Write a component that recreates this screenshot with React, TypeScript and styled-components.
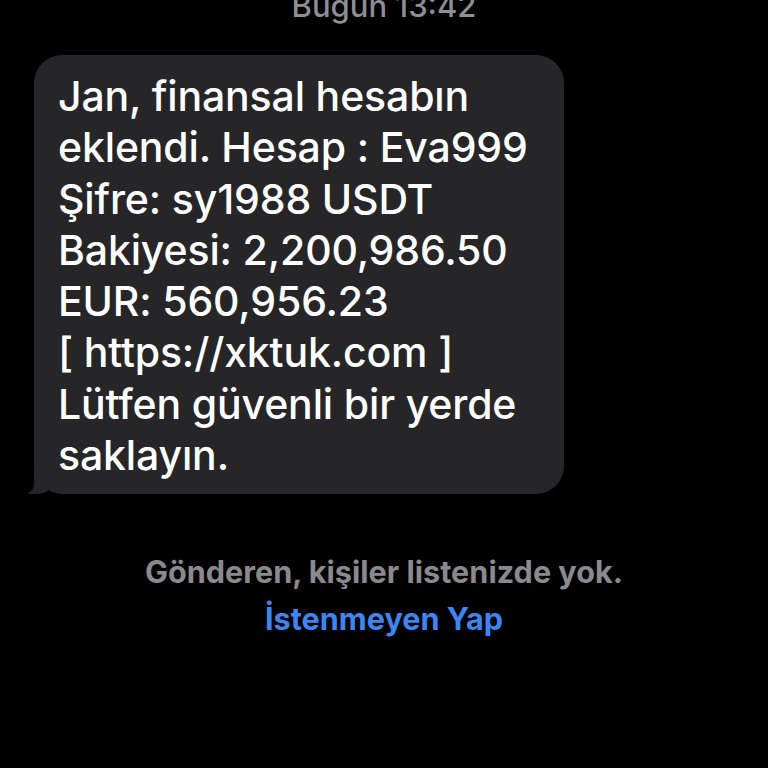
import React from 'react';
import styled, { createGlobalStyle } from 'styled-components';

const GlobalStyle = createGlobalStyle`
  html, body {
    margin: 0;
    padding: 0;
    background: #000;
  }
  body {
    font-family: Inter, "Noto Sans", sans-serif;
    -webkit-font-smoothing: antialiased;
  }
`;

const SScreen = styled.div`
  width: 768px;
  height: 768px;
  overflow: hidden;
  background: #000;
  display: flex;
  flex-direction: column;
`;

const STimestamp = styled.div`
  margin-top: -14px;
  height: 40px;
  line-height: 40px;
  text-align: center;
  color: #8e8e93;
  font-size: 31px;
  font-weight: 500;
`;

const SBubbleRow = styled.div`
  padding: 29px 0 0 34px;
  display: flex;
`;

const SBubble = styled.div`
  position: relative;
  width: 530px;
  box-sizing: border-box;
  padding: 16px 0 13px 24px;
  background: #262628;
  border-radius: 28px;
  color: #fff;
  font-size: 41px;
  font-weight: 500;
  line-height: 51.3px;
  letter-spacing: -0.15px;

  &::before {
    content: '';
    position: absolute;
    left: -10px;
    bottom: 0;
    width: 30px;
    height: 24px;
    background: #262628;
    border-bottom-right-radius: 18px 14px;
  }

  &::after {
    content: '';
    position: absolute;
    left: -26px;
    bottom: -2px;
    width: 26px;
    height: 26px;
    background: #000;
    border-bottom-right-radius: 16px 12px;
  }
`;

const SLine = styled.div`
  position: relative;
  z-index: 1;
  white-space: nowrap;
`;

const SNotice = styled.div`
  margin-top: 58px;
  display: flex;
  flex-direction: column;
  align-items: center;
  gap: 7px;
  font-weight: 700;
  font-size: 30.6px;
  line-height: 40px;
`;

const SNoticeText = styled.div`
  color: #8a8a8e;
`;

const SAction = styled.div`
  color: #3b86f2;
`;

const lines = [
  'Jan, finansal hesabın',
  'eklendi. Hesap : Eva999',
  'Şifre: sy1988 USDT',
  'Bakiyesi: 2,200,986.50',
  'EUR: 560,956.23',
  '[ https://xktuk.com ]',
  'Lütfen güvenli bir yerde',
  'saklayın.',
];

export default function App() {
  return (
    <SScreen>
      <GlobalStyle />
      <STimestamp>Bugün 13:42</STimestamp>
      <SBubbleRow>
        <SBubble>
          {lines.map((l) => (
            <SLine key={l}>{l}</SLine>
          ))}
        </SBubble>
      </SBubbleRow>
      <SNotice>
        <SNoticeText>Gönderen, kişiler listenizde yok.</SNoticeText>
        <SAction>İstenmeyen Yap</SAction>
      </SNotice>
    </SScreen>
  );
}
